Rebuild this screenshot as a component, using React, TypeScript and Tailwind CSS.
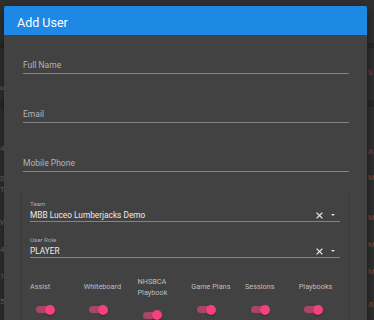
import React from "react";

function Toggle() {
  return (
    <div className="relative ml-[5.5px] h-[10px] w-[19px]">
      <div className="absolute left-0 top-[1.5px] h-[7px] w-[17.5px] rounded-full bg-[#a8456a]" />
      <div className="absolute right-0 top-0 h-[10px] w-[10px] rounded-full bg-[#f5417d] shadow-[0_1px_1px_rgba(0,0,0,0.35)]" />
    </div>
  );
}

function ClearX() {
  return (
    <svg width="7" height="7" viewBox="0 0 7 7" className="shrink-0">
      <path d="M0.6 0.6 L6.4 6.4 M6.4 0.6 L0.6 6.4" stroke="#e6e6e6" strokeWidth="1.3" />
    </svg>
  );
}

function Caret() {
  return (
    <svg width="4" height="2" viewBox="0 0 4 2" className="ml-[8px] mr-[5px] shrink-0">
      <path d="M0 0 L4 0 L2 2 Z" fill="#dcdcdc" />
    </svg>
  );
}

function TextField({ label, first }: { label: string; first?: boolean }) {
  return (
    <div className={first ? "" : "mt-[34px]"}>
      <div className="border-b border-[#858585] pb-[2px] text-[8.5px] leading-[12px] text-[#b4b4b4]">
        {label}
      </div>
    </div>
  );
}

function SelectField({ label, value, className }: { label: string; value: string; className?: string }) {
  return (
    <div className={className}>
      <div className="h-[8px] text-[6.2px] leading-[8px] text-[#ababab]">{label}</div>
      <div className="mt-[1px] box-content flex h-[12px] items-center border-b border-[#858585]">
        <div className="flex-1 text-[8.3px] leading-[12px] text-[#ececec]">{value}</div>
        <ClearX />
        <Caret />
      </div>
    </div>
  );
}

const perms: string[][] = [
  ["Assist"],
  ["Whiteboard"],
  ["NHSBCA", "Playbook"],
  ["Game Plans"],
  ["Sessions"],
  ["Playbooks"],
];

export default function App() {
  return (
    <div className="relative h-[320px] w-[374px] overflow-hidden bg-[#303030] font-['Roboto',sans-serif]">
      {/* background page */}
      <div className="flex h-[320px]">
        <div className="flex w-[4px] flex-col overflow-hidden whitespace-nowrap text-[8px] leading-[10px] text-[#6f6f6f]">
          <div className="h-[43px]" />
          <div className="h-[5px] bg-[#272727]" />
          <div className="mt-[35px]">u</div>
          <div className="mt-[8px] h-[7px] bg-[#282828]" />
          <div className="mt-[36px]">4</div>
          <div className="mt-[20px]">S</div>
          <div className="mt-[1px]">T</div>
          <div className="mt-[23px]">W</div>
          <div className="mt-[17px]">4</div>
          <div className="mt-[17px]">1</div>
          <div className="mt-[15px]">5</div>
        </div>
        <div className="ml-auto flex w-[7px] flex-col overflow-hidden whitespace-nowrap pl-[1px] text-[8px] font-medium leading-[10px] text-[#7a4638]">
          <div className="h-[43px]" />
          <div className="h-[5px] bg-[#272727]" />
          <div className="mt-[20px] h-[10px]">S</div>
          <div className="mt-[22px] h-[7px] bg-[#282828]" />
          <div className="mt-[40px] h-[10px]">AP</div>
          <div className="mt-[16px] h-[10px]">M</div>
          <div className="mt-[30px] h-[10px]">M</div>
          <div className="mt-[17px] h-[10px]">M</div>
          <div className="mt-[17px] h-[10px]">M</div>
          <div className="mt-[23px] h-[10px]">AY</div>
        </div>
      </div>

      {/* dialog */}
      <div className="absolute left-[4px] top-[6px] h-[330px] w-[363px] overflow-hidden rounded-t-[2px] bg-[#424242] shadow-[0_4px_12px_rgba(0,0,0,0.5)]">
        <div className="h-[29px] bg-[#1e88e5] pl-[13px] pt-[10px] text-[12.5px] leading-[14.6px] text-white">
          Add User
        </div>
        <div className="pl-[19px] pr-[18px] pt-[24px]">
          <TextField label="Full Name" first />
          <TextField label="Email" />
          <TextField label="Mobile Phone" />

          <div className="-ml-[2px] mt-[18px] h-[200px] border-x border-[#393939] pl-[8px] pr-[8px] pt-[10px]">
            <SelectField label="Team" value="MBB Luceo Lumberjacks Demo" />
            <SelectField className="mt-[14px]" label="User Role" value="PLAYER" />

            <div className="mt-[19px] flex items-center">
              {perms.map((lines, i) => (
                <div key={i} className="flex w-[53.75px] shrink-0 flex-col">
                  <div className="text-[7.3px] leading-[10.6px] text-[#bfbfbf]">
                    {lines.map((l, j) => (
                      <div key={j}>{l}</div>
                    ))}
                  </div>
                  <div className="mt-[12px]">
                    <Toggle />
                  </div>
                </div>
              ))}
            </div>
          </div>
        </div>
      </div>
    </div>
  );
}
